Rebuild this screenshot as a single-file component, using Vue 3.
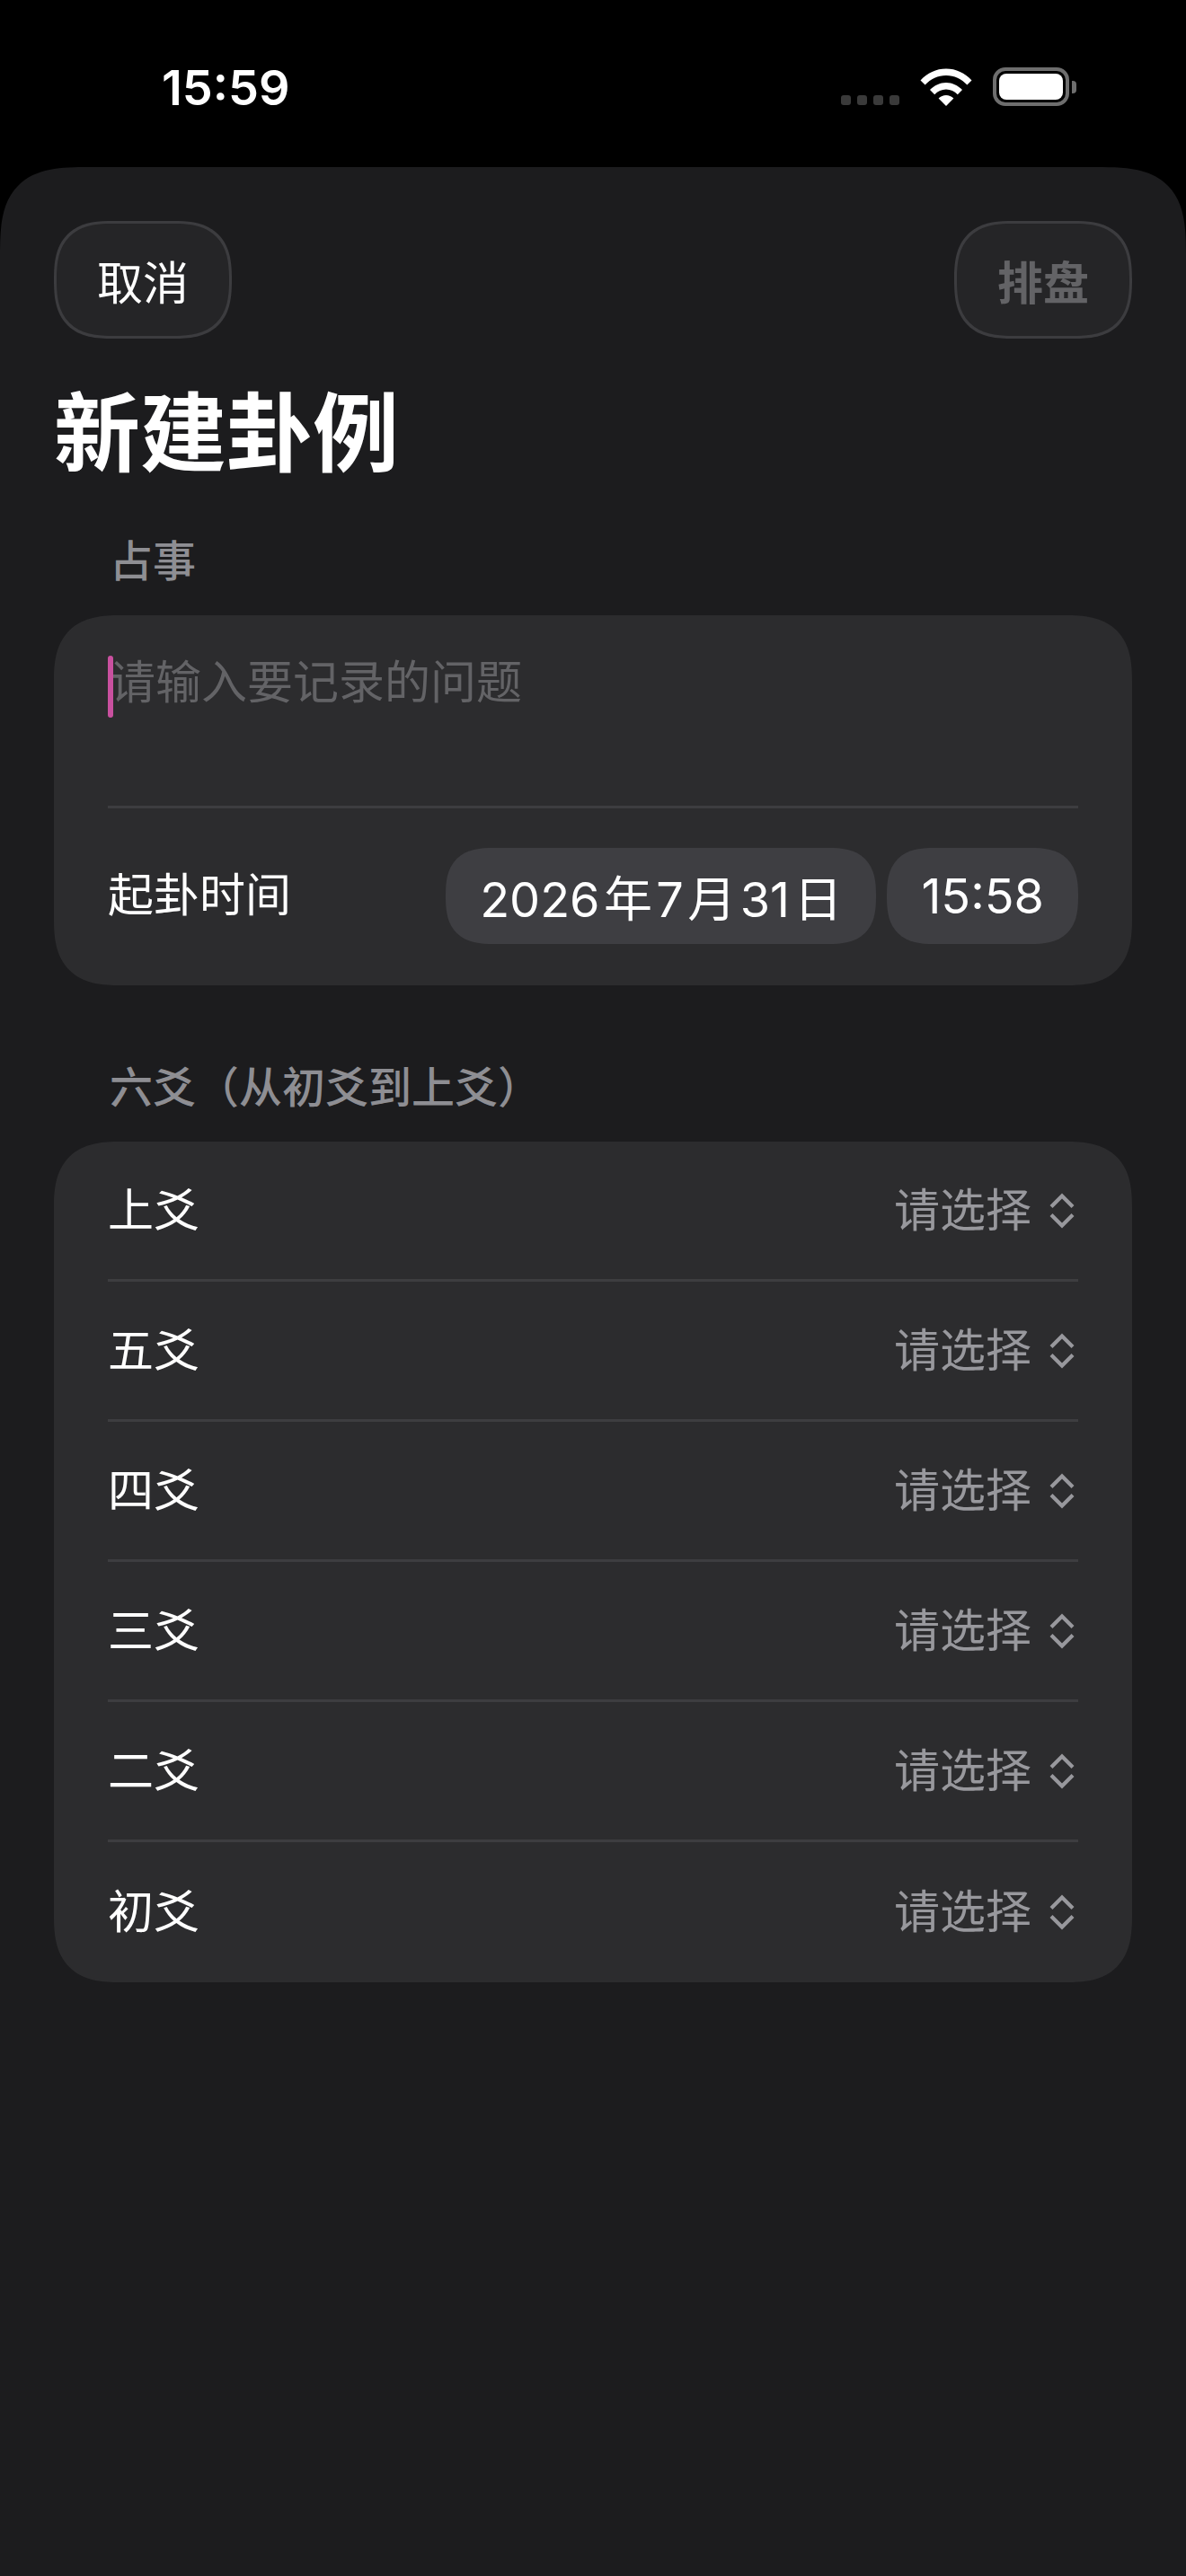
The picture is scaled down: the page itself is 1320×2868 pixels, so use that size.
<script setup>
const yaoList = ['上爻', '五爻', '四爻', '三爻', '二爻', '初爻']
</script>

<template>
  <div class="screen">
    <div class="status-bar">
      <span class="clock">15:59</span>
      <div class="status-icons">
        <div class="signal">
          <i v-for="n in 4" :key="n"></i>
        </div>
        <svg class="wifi" width="58" height="43" viewBox="0 0 58 43">
          <path d="M0.5 14.5C8 6.2 18 1.5 29 1.5S50 6.2 57.5 14.5L52.4 19.6C46.2 12.9 38 9 29 9S11.8 12.9 5.6 19.6Z" fill="#fff" />
          <path d="M11 25C16 20 22.2 17 29 17S42 20 47 25L41.8 30.2C38.3 26.6 33.9 24.5 29 24.5S19.7 26.6 16.2 30.2Z" fill="#fff" />
          <path d="M20.6 34.6C23 32.2 25.8 31 29 31S35 32.2 37.4 34.6L29 43Z" fill="#fff" />
        </svg>
        <div class="battery">
          <div class="battery-body"><div class="battery-level"></div></div>
          <div class="battery-cap"></div>
        </div>
      </div>
    </div>

    <div class="sheet">
      <div class="toolbar">
        <button class="round-btn">取消</button>
        <button class="round-btn disabled">排盘</button>
      </div>

      <h1 class="title">新建卦例</h1>

      <div class="section-label">占事</div>
      <div class="card">
        <div class="question">
          <span class="caret"></span>
          <span class="placeholder">请输入要记录的问题</span>
        </div>
        <div class="time-row">
          <span class="row-name">起卦时间</span>
          <div class="pills">
            <span class="pill date">2026 年 7 月 31 日</span>
            <span class="pill">15:58</span>
          </div>
        </div>
      </div>

      <div class="section-label second">六爻（从初爻到上爻）</div>
      <div class="card">
        <div v-for="yao in yaoList" :key="yao" class="yao-row">
          <span class="row-name">{{ yao }}</span>
          <span class="picker">
            请选择
            <svg width="28" height="40" viewBox="0 0 28 40" fill="none" stroke="#98989d" stroke-width="4.2">
              <path d="M2 15.5L14 3.5L26 15.5" />
              <path d="M2 24.5L14 36.5L26 24.5" />
            </svg>
          </span>
        </div>
      </div>
    </div>
  </div>
</template>

<style>
body {
  background: #000;
}
</style>

<style scoped>
.screen {
  width: 1320px;
  height: 2868px;
  overflow: hidden;
  display: flex;
  flex-direction: column;
  background: #000;
  color: #fff;
  font-family: Inter, "Noto Sans CJK SC", sans-serif;
}

.status-bar {
  height: 186px;
  flex: none;
  display: flex;
  justify-content: space-between;
  padding: 75px 122px 0 180px;
  box-sizing: border-box;
}

.clock {
  font-size: 54px;
  line-height: 46px;
  font-weight: 600;
}

.status-icons {
  display: flex;
  align-items: flex-start;
}

.signal {
  display: flex;
  gap: 7px;
  margin-top: 31px;
  margin-right: 23px;
}

.signal i {
  width: 11px;
  height: 11px;
  border-radius: 3px;
  background: #3a3a3a;
}

.wifi {
  display: block;
  margin-right: 23px;
}

.battery {
  display: flex;
  align-items: center;
}

.battery-body {
  width: 85px;
  height: 43px;
  box-sizing: border-box;
  border: 4px solid #6e6e6e;
  border-radius: 14px;
  padding: 3px;
}

.battery-level {
  width: 100%;
  height: 100%;
  background: #fff;
  border-radius: 8px;
}

.battery-cap {
  width: 5px;
  height: 14px;
  margin-left: 3px;
  background: #6e6e6e;
  border-radius: 0 4px 4px 0;
}

.sheet {
  flex: 1;
  background: #1c1c1e;
  border-radius: 100px 100px 0 0;
  corner-shape: superellipse(1.6);
  padding: 60px 60px 0;
}

.toolbar {
  display: flex;
  justify-content: space-between;
}

.round-btn {
  width: 198px;
  height: 131px;
  box-sizing: border-box;
  padding: 0;
  border: 3px solid #3c3c3f;
  border-radius: 65px;
  corner-shape: superellipse(1.4);
  background: #252527;
  color: #fff;
  font-family: inherit;
  font-size: 51px;
}

.round-btn.disabled {
  color: #636366;
  font-weight: 600;
}

.title {
  margin: 45px 0 0;
  font-size: 96px;
  line-height: 120px;
  font-weight: 700;
}

.section-label {
  margin: 53px 0 30px 62px;
  font-size: 48px;
  line-height: 60px;
  font-weight: 500;
  color: #8e8e93;
}

.section-label.second {
  margin-top: 84px;
}

.card {
  background: #2c2c2e;
  border-radius: 74px;
  corner-shape: superellipse(1.4);
  padding: 0 60px;
}

.question {
  position: relative;
  height: 215px;
  box-sizing: border-box;
  padding: 40px 0 0 2px;
  border-bottom: 3px solid #3d3d40;
}

.caret {
  position: absolute;
  left: 0;
  top: 45px;
  width: 6px;
  height: 69px;
  border-radius: 3px;
  background: #c9509f;
}

.placeholder {
  font-size: 51px;
  line-height: 70px;
  color: #636366;
}

.time-row {
  display: flex;
  justify-content: space-between;
  align-items: center;
  height: 197px;
  padding-bottom: 3px;
  box-sizing: border-box;
}

.row-name {
  font-size: 51px;
  line-height: 70px;
}

.pills {
  display: flex;
  gap: 12px;
}

.pill {
  height: 107px;
  padding: 0 38px;
  display: flex;
  align-items: center;
  background: #3e3e42;
  border-radius: 53px;
  corner-shape: superellipse(1.4);
  font-size: 54px;
}

.pill.date {
  word-spacing: -0.2em;
}

.yao-row {
  height: 156px;
  box-sizing: border-box;
  display: flex;
  justify-content: space-between;
  align-items: center;
  border-bottom: 3px solid #3d3d40;
}

.yao-row:last-child {
  border-bottom: none;
}

.picker {
  display: flex;
  align-items: center;
  gap: 20px;
  font-size: 51px;
  line-height: 70px;
  color: #98989d;
}

.picker svg {
  display: block;
  margin-right: 4px;
}
</style>
